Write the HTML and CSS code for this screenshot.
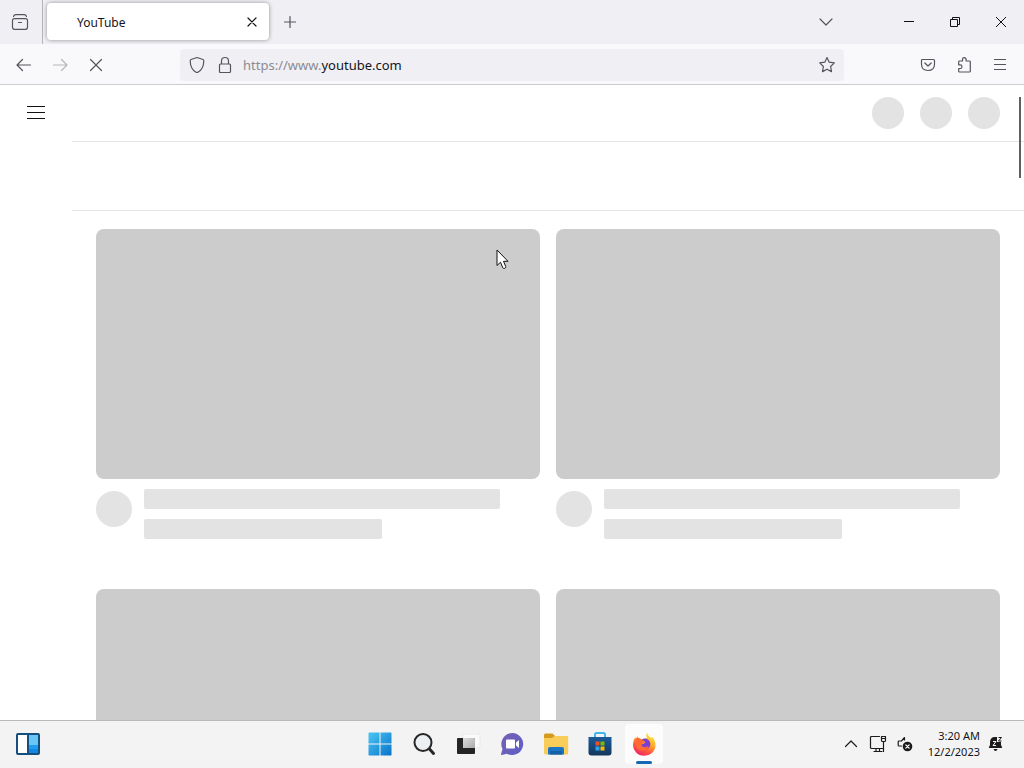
FILE: index.html
```html
<!DOCTYPE html>
<html lang="en">
  <head>
    <title>YouTube</title>
    <meta charset="UTF-8" />
    <meta name="viewport" content="width=device-width, initial-scale=1.0" />
    <link rel="stylesheet" href="styles.css">
  </head>
  <body>
    <header class="browser">
      <div class="tab-bar">
        <button class="view-btn" aria-label="Firefox View">
          <svg width="18" height="18" viewBox="0 0 18 18" class="line"><path d="M4.500 1.700h9q1.500.3 2 1.800M4.500 1.700Q3 2 2.500 3.500M3.500 5.700h11q2 0 2 2v6.600q0 2-2 2h-11q-2 0-2-2V7.700q0-2 2-2zM7.500 9.500h3"/></svg>
        </button>
        <div class="tab">
          <span>YouTube</span>
          <button class="tab-close" aria-label="Close tab">
            <svg width="10" height="10" viewBox="0 0 10 10" class="line"><path d="M1 1l8 8M9 1L1 9"/></svg>
          </button>
        </div>
        <button class="new-tab" aria-label="New tab">
          <svg width="14" height="14" viewBox="0 0 14 14" class="line"><path d="M7 1.500v11M1.500 7h11"/></svg>
        </button>
        <div class="window-controls">
          <button class="list-tabs" aria-label="List all tabs">
            <svg width="14" height="8" viewBox="0 0 14 8" class="line"><path d="M1 1l6 6 6-6"/></svg>
          </button>
          <button aria-label="Minimize">
            <svg width="10" height="10" viewBox="0 0 10 10" class="thin"><path d="M0 4.500h10"/></svg>
          </button>
          <button aria-label="Restore">
            <svg width="10" height="10" viewBox="0 0 10 10" class="thin"><path d="M.5 2.500h7v7h-7zM2.500 2.500v-2h7v7h-2"/></svg>
          </button>
          <button aria-label="Close">
            <svg width="10" height="10" viewBox="0 0 10 10" class="thin"><path d="M0 0l10 10M10 0L0 10"/></svg>
          </button>
        </div>
      </div>

      <div class="toolbar">
        <button aria-label="Back">
          <svg width="16" height="14" viewBox="0 0 16 14" class="line"><path d="M14.500 7h-13M6.500 1.500L1 7l5.500 5.500"/></svg>
        </button>
        <button aria-label="Forward" disabled>
          <svg width="16" height="14" viewBox="0 0 16 14" class="line"><path d="M1.500 7h13M9.500 1.500L15 7l-5.500 5.500"/></svg>
        </button>
        <button aria-label="Stop">
          <svg width="14" height="14" viewBox="0 0 14 14" class="line"><path d="M1.500 1.500l11 11M12.500 1.500l-11 11"/></svg>
        </button>
        <form class="url-bar">
          <svg width="16" height="18" viewBox="0 0 16 18" class="line"><path d="M8 1.500L14 3.500q.8.300.8 1.500-.2 8-5.800 11.200-1 .5-2 0Q1.400 13 1.200 5q0-1.200.8-1.500z"/></svg>
          <svg width="14" height="18" viewBox="0 0 14 18" class="line lock"><path d="M2.500 8h9q1 0 1 1v6.500q0 1-1 1h-9q-1 0-1-1V9q0-1 1-1zM3.500 8V5q0-3.500 3.500-3.500T10.500 5v3"/></svg>
          <label for="url">https://www.</label>
          <input type="text" id="url" value="youtube.com" spellcheck="false">
          <button type="button" class="bookmark" aria-label="Bookmark this page">
            <svg width="18" height="18" viewBox="0 0 18 18" class="line"><path d="M9 1.600l2.200 4.600 5.100.7-3.700 3.600.9 5.100L9 13.200l-4.500 2.400.9-5.100L1.700 6.900l5.100-.7z"/></svg>
          </button>
        </form>
        <button aria-label="Save to Pocket">
          <svg width="16" height="14" viewBox="0 0 16 14" class="line"><path d="M2.500 1.500h11q1 0 1 1V6q0 6.500-6.500 6.500T1.500 6V2.500q0-1 1-1zM4.800 5L8 8 11.200 5"/></svg>
        </button>
        <button aria-label="Extensions">
          <svg width="16" height="18" viewBox="0 0 16 18" class="line"><path d="M3.500 5H6.500V3.500a1.800 1.800 0 0 1 3.600 0V5H13.500q.8 0 .8.800v9.400q0 .8-.8.800h-10q-.8 0-.8-.8V12.500h1.500a1.800 1.800 0 0 0 0-3.600H2.700V5.800q0-.8.8-.8z"/></svg>
        </button>
        <button aria-label="Application menu">
          <svg width="12" height="11" viewBox="0 0 12 11" class="thin grey"><path d="M0 .5h12M0 5.500h12M0 10.500h12"/></svg>
        </button>
      </div>
    </header>

    <main class="page">
      <aside class="guide">
        <button aria-label="Guide">
          <svg width="18" height="13" viewBox="0 0 18 13" class="thin"><path d="M0 .5h18M0 6.500h18M0 12.500h18"/></svg>
        </button>
      </aside>
      <div class="content">
        <div class="masthead">
          <div class="circle"></div>
          <div class="circle"></div>
          <div class="circle"></div>
        </div>
        <div class="chips"></div>
        <div class="videos">
          <div class="video">
            <div class="thumbnail"></div>
            <div class="details">
              <div class="avatar"></div>
              <div class="text">
                <div class="bar"></div>
                <div class="bar short"></div>
              </div>
            </div>
          </div>
          <div class="video">
            <div class="thumbnail"></div>
            <div class="details">
              <div class="avatar"></div>
              <div class="text">
                <div class="bar"></div>
                <div class="bar short"></div>
              </div>
            </div>
          </div>
          <div class="video">
            <div class="thumbnail"></div>
          </div>
          <div class="video">
            <div class="thumbnail"></div>
          </div>
        </div>
      </div>
      <div class="scroll-thumb"></div>
      <svg class="cursor" width="13" height="21" viewBox="0 0 13 21"><path d="M1 1v15.500l3.500-3.300 2.300 5.600q.8 1 2 .5t1-1.600L7.500 12.300H12z" fill="#fff" stroke="#111"/></svg>
    </main>

    <footer class="taskbar">
      <div class="widgets">
        <button aria-label="Widgets">
          <svg width="24" height="22" viewBox="0 0 24 22">
            <rect x="1" y="1" width="22" height="20" rx="1" fill="#fff"/>
            <path d="M12 1h11v11H12z" fill="#69c7f8"/>
            <path d="M12 12h11v9H12z" fill="#1386e2"/>
            <path d="M12 12h11v4H12z" fill="#209cf0"/>
            <path d="M12 1v20" stroke="#174f7c" stroke-width="2"/>
            <rect x="1" y="1" width="22" height="20" rx="1" fill="none" stroke="#174f7c" stroke-width="2"/>
          </svg>
        </button>
      </div>
      <div class="apps">
        <button aria-label="Start">
          <svg width="24" height="24" viewBox="0 0 24 24">
            <defs><linearGradient id="win" x2="1" y2="1"><stop stop-color="#4cc7f4"/><stop offset="1" stop-color="#0873c9"/></linearGradient></defs>
            <path d="M1 .5h10.500V11.500H.5V1zM12.500.5H23l.5.5v10.500h-11zM.5 12.500h11v11H1l-.5-.5zM12.500 12.500h11V23l-.5.5H12.500z" fill="url(#win)"/>
          </svg>
        </button>
        <button aria-label="Search">
          <svg width="24" height="24" viewBox="0 0 24 24"><circle cx="11" cy="10.500" r="8.500" fill="#edf0f2" stroke="#262626" stroke-width="2"/><path d="M17.500 17l4 4.500" stroke="#262626" stroke-width="3" stroke-linecap="round"/></svg>
        </button>
        <button aria-label="Task view">
          <svg width="26" height="24" viewBox="0 0 26 24">
            <defs><linearGradient id="tv" x2="1" y2="1"><stop stop-color="#ddd"/><stop offset="1" stop-color="#aaa"/></linearGradient></defs>
            <rect x="8" y="2" width="17" height="14" rx="1" fill="#fafafa" stroke="#eaeaea"/>
            <rect x="2" y="6" width="18" height="16" rx="1" fill="#242424"/>
            <path d="M8 6h11q1 0 1 1v9H8z" fill="url(#tv)"/>
          </svg>
        </button>
        <button aria-label="Chat">
          <svg width="24" height="24" viewBox="0 0 24 24">
            <defs><linearGradient id="chat" x2="1" y2="1"><stop stop-color="#7a5fb0"/><stop offset="1" stop-color="#5c5fc8"/></linearGradient></defs>
            <path d="M12.500 1A11 11 0 1 1 7 21.700L1.500 23q-.7 0-.5-.8L2.500 17A11 11 0 0 1 12.500 1z" fill="url(#chat)"/>
            <rect x="6" y="7.500" width="9" height="9" rx="1" fill="#fff"/>
            <path d="M16 10.500L19 8v8l-3-2.500z" fill="#fff"/>
          </svg>
        </button>
        <button aria-label="File Explorer">
          <svg width="26" height="24" viewBox="0 0 26 24">
            <path d="M1 3q0-1.500 1.500-1.500h7L12 4v6H1z" fill="#d79a20"/>
            <path d="M1 6h8l2.500-2H24q1.200 0 1.200 1.200V21q0 1.500-1.500 1.500h-21Q1 22.500 1 21z" fill="#f8cc58"/>
            <path d="M5 22.500V17q0-2 2-2h12q2 0 2 2v5.500z" fill="#1976c4"/>
            <path d="M7 19h12v3.500H7z" fill="#145fa8"/>
          </svg>
        </button>
        <button aria-label="Microsoft Store">
          <svg width="24" height="24" viewBox="0 0 24 24">
            <defs><linearGradient id="store" x2="0" y2="1"><stop stop-color="#1c5c9c"/><stop offset="1" stop-color="#14365c"/></linearGradient></defs>
            <path d="M7 6V2.500Q7 1 8.500 1h7Q17 1 17 2.500V6" fill="none" stroke="#3fb8e8" stroke-width="2"/>
            <path d="M.5 5h23v15.500q0 3-3 3h-17q-3 0-3-3z" fill="url(#store)"/>
            <path d="M7.500 9.500h4v4h-4z" fill="#f25022"/>
            <path d="M12.500 9.500h4v4h-4z" fill="#7fba00"/>
            <path d="M7.500 14.500h4v4h-4z" fill="#28a8ea"/>
            <path d="M12.500 14.500h4v4h-4z" fill="#ffb900"/>
          </svg>
        </button>
        <button class="active" aria-label="Firefox">
          <svg width="24" height="24" viewBox="0 0 24 24">
            <defs>
              <linearGradient id="fox" x1=".8" y1="0" x2=".3" y2="1"><stop stop-color="#fff13f"/><stop offset=".4" stop-color="#ffb02c"/><stop offset=".7" stop-color="#ff5b3e"/><stop offset="1" stop-color="#ee2468"/></linearGradient>
            </defs>
            <path d="M15 .5q1 3.500 4 5.500 1-.5 1-1.500 3.500 4 3.500 9A11.200 10.500 0 0 1 1 13Q.8 8 3.500 5l.5 2q.5-2 2-3l.5 2.500 3.500.5q2 .3 5-1Q13.500 3.500 15 .5z" fill="url(#fox)"/>
            <path d="M9.500 8q4-3 7.500.5 2.500 3 .5 6.500-3 3.500-7 2-3-1.500-3-4.500l4-.5 2-2z" fill="#7a3fd0"/>
            <path d="M3.500 7q3-2 5.500.5l3.500 1.500q-.5 2-2.500 2.500-1 2.500 1.500 3.500 2.500.5 5-1-1.500 4.500-6 4.500T4 14z" fill="#ff6a35"/>
          </svg>
        </button>
      </div>
      <div class="tray">
        <button aria-label="Show hidden icons">
          <svg width="12" height="8" viewBox="0 0 12 8" class="line dark"><path d="M.5 6.500L6 1l5.500 5.500"/></svg>
        </button>
        <button class="network" aria-label="Network">
          <svg width="18" height="18" viewBox="0 0 18 18" class="line dark"><path d="M10.500 1.500h-8q-1 0-1 1v10q0 1 1 1h11.500M5 16.500h8M7 13.500v3M10.500 13.500v3M12.500 1.500h4v4q0 1-1 1h-2q-1 0-1-1zM12.500 3.500h4M14.500 6.500v10"/></svg>
        </button>
        <button aria-label="Volume muted">
          <svg width="16" height="16" viewBox="0 0 16 16" class="line dark"><path d="M7.500 4V1.500L4.500 5H2q-.8 0-.8.800v3.400q0 .8.800.8h2.500"/><circle cx="10.500" cy="10.500" r="4.800" fill="#1b1b1b" stroke="none"/><path d="M8.800 8.800l3.400 3.400M12.200 8.800l-3.400 3.400" stroke="#fff"/></svg>
        </button>
        <button class="clock"><time datetime="2023-12-02T03:20">3:20 AM<br>12/2/2023</time></button>
        <button class="bell" aria-label="Notifications">
          <svg width="16" height="16" viewBox="0 0 16 16">
            <path d="M2 6.500Q2 1 7 1h2v5h4v3l1 2q.5 1-.5 1h-12q-1 0-.5-1l1-2z" fill="#1b1b1b"/>
            <path d="M5.500 13h4q-.5 2-2 2t-2-2z" fill="#1b1b1b"/>
            <path d="M5 5.500h3L5 9.500h3" fill="none" stroke="#f3f3f3"/>
            <path d="M10.500 1.500h3l-3 3.500h3" fill="none" stroke="#1b1b1b"/>
          </svg>
        </button>
      </div>
    </footer>
  </body>
</html>
```
FILE: styles.css
```css
body {
  display: flex;
  flex-direction: column;
  height: 100vh;
  margin: 0;
  overflow: hidden;
  background: #ffffff;
  color: #15141a;
  font-family: "Noto Sans", "Open Sans", sans-serif;
  font-size: 12px;
}
button {
  display: flex;
  align-items: center;
  justify-content: center;
  flex: none;
  margin: 0;
  padding: 0;
  border: none;
  background: none;
  color: inherit;
  font: inherit;
}
.line {
  flex: none;
  fill: none;
  stroke: #55545c;
  stroke-width: 1.2;
  stroke-linecap: round;
  stroke-linejoin: round;
}
.thin {
  fill: none;
  stroke: #111111;
  stroke-width: 1;
}
.grey {
  stroke: #55545c;
}
.dark {
  stroke: #1b1b1b;
}

/* tabs */
.tab-bar {
  display: flex;
  height: 44px;
  background: #f0f0f4;
}
.view-btn {
  width: 43px;
  padding-right: 2px;
  border-right: 1px solid #b4b4b9;
}
.tab {
  display: flex;
  align-items: center;
  justify-content: space-between;
  width: 180px;
  height: 37px;
  margin: 3px 0 0 4px;
  padding: 1px 12px 0 30px;
  box-sizing: content-box;
  height: 36px;
  border-radius: 4px;
  background: #ffffff;
  box-shadow: 0 0 4px rgba(0, 0, 0, 0.4);
}
.tab-close {
  width: 10px;
  height: 20px;
}
.tab-close .line {
  stroke: #15141a;
}
.new-tab {
  width: 42px;
}
.window-controls {
  display: flex;
  margin-left: auto;
}
.window-controls button {
  width: 46px;
}
.window-controls .list-tabs {
  width: 36px;
  margin-right: 42px;
}

/* navigation */
.toolbar {
  display: flex;
  align-items: center;
  height: 39px;
  padding: 1px 6px 0;
  border-bottom: 1px solid #cccccc;
  background: #f9f9fb;
}
.toolbar button {
  width: 36px;
  height: 32px;
}
.toolbar button:disabled {
  opacity: 0.4;
}
.url-bar {
  display: flex;
  align-items: center;
  flex: 1;
  height: 32px;
  margin: 0 66px;
  padding-left: 9px;
  border-radius: 4px;
  background: #f0f0f4;
  font-size: 13px;
}
.url-bar .lock {
  margin: 0 11px 0 13px;
}
.url-bar .bookmark {
  width: 34px;
}
.url-bar label {
  color: #8b8b92;
}
.url-bar input {
  flex: 1;
  min-width: 0;
  padding: 0;
  border: none;
  outline: none;
  background: none;
  color: #15141a;
  font: inherit;
}

/* loading page */
.page {
  position: relative;
  display: flex;
  flex: 1;
  min-height: 0;
  overflow: hidden;
}
.guide {
  width: 72px;
}
.guide button {
  width: 72px;
  height: 55px;
}
.content {
  flex: 1;
}
.masthead {
  display: flex;
  align-items: center;
  justify-content: flex-end;
  gap: 16px;
  height: 56px;
  padding-right: 24px;
  border-bottom: 1px solid #e5e5e5;
}
.circle {
  width: 32px;
  height: 32px;
  border-radius: 50%;
  background: #e3e3e3;
}
.chips {
  height: 68px;
  border-bottom: 1px solid #e5e5e5;
}
.videos {
  display: grid;
  grid-template-columns: 1fr 1fr;
  gap: 50px 16px;
  padding: 18px 24px 0;
}
.thumbnail {
  aspect-ratio: 16 / 9;
  border-radius: 8px;
  background: #cccccc;
}
.details {
  display: flex;
  gap: 12px;
  padding-top: 10px;
}
.avatar {
  width: 36px;
  height: 36px;
  margin-top: 2px;
  border-radius: 50%;
  background: #e3e3e3;
}
.text {
  flex: 1;
}
.bar {
  width: 90%;
  height: 20px;
  border-radius: 2px;
  background: #e3e3e3;
}
.short {
  width: 60%;
  margin-top: 10px;
}
.scroll-thumb {
  position: absolute;
  top: 12px;
  right: 3px;
  width: 2px;
  height: 81px;
  background: #5f5f62;
}
.cursor {
  position: absolute;
  top: 164px;
  left: 496px;
}

/* taskbar */
.taskbar {
  display: grid;
  grid-template-columns: 1fr auto 1fr;
  align-items: center;
  height: 45px;
  padding-bottom: 2px;
  border-top: 1px solid #b9b9b9;
  background: #f3f3f3;
}
.widgets {
  padding-left: 8px;
}
.widgets button {
  width: 40px;
  height: 40px;
}
.apps {
  display: flex;
}
.apps button {
  position: relative;
  width: 38px;
  height: 40px;
  margin: 0 3px;
}
.apps .active {
  border-radius: 4px;
  background: #fcfcfc;
}
.apps .active::after {
  content: "";
  position: absolute;
  bottom: 0;
  width: 16px;
  height: 3px;
  border-radius: 2px;
  background: #1467b3;
}
.tray {
  display: flex;
  align-items: center;
  justify-content: flex-end;
  padding-right: 20px;
}
.tray button {
  width: 26px;
  height: 40px;
}
.tray .network {
  width: 28px;
}
.tray .clock {
  width: auto;
  margin-left: 10px;
  font-size: 11px;
  line-height: 16px;
  text-align: right;
}
.tray .bell {
  width: 24px;
  justify-content: flex-end;
}
```
